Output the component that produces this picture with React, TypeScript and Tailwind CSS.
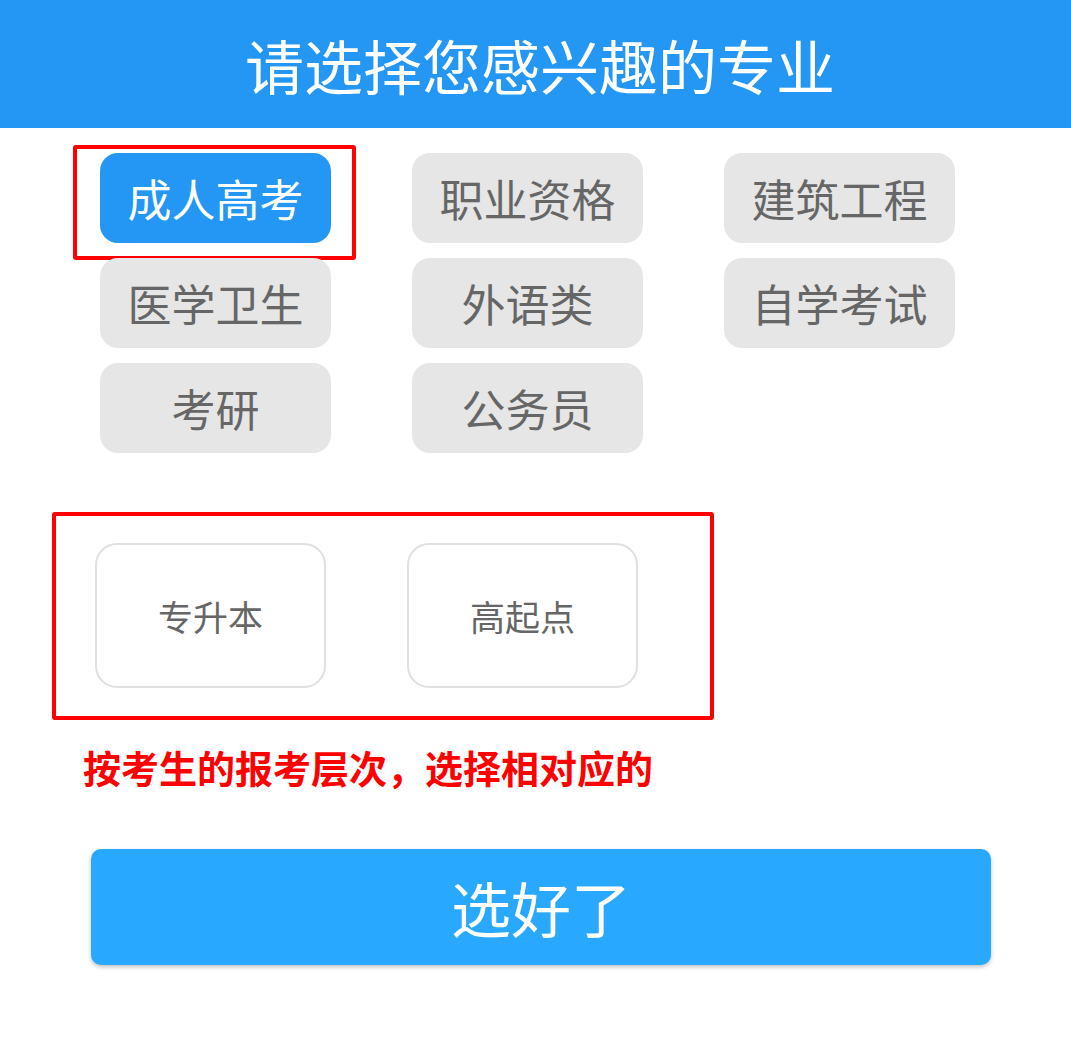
const MAJORS = ["成人高考", "职业资格", "建筑工程", "医学卫生", "外语类", "自学考试", "考研", "公务员"];
const LEVELS = ["专升本", "高起点"];

const font = "font-['Noto_Sans_CJK_SC','Noto_Sans',sans-serif]";

export default function App() {
  return (
    <div className={`w-[1071px] h-[1045px] bg-white ${font}`}>
      <header className="h-[128px] bg-[#2397f3] flex items-center justify-center pl-[9px]">
        <h1 className="text-[59px] leading-none text-white">请选择您感兴趣的专业</h1>
      </header>

      <div className="pl-[100px] pt-[25px] grid grid-cols-[231px_231px_231px] gap-x-[81px] gap-y-[15px]">
        {MAJORS.map((m, i) => (
          <div key={m} className="relative">
            <button
              className={
                i === 0
                  ? "w-full h-[90px] rounded-[18px] bg-[#2397f3] text-white text-[44px] leading-none"
                  : "w-full h-[90px] rounded-[18px] bg-[#e6e6e6] text-[#666666] text-[44px] leading-none"
              }
            >
              {m}
            </button>
            {i === 0 && (
              <div className="absolute left-[-27px] top-[-8px] w-[283px] h-[115px] border-[4px] border-[#ff0000] rounded-[3px] pointer-events-none" />
            )}
          </div>
        ))}
      </div>

      <div className="ml-[52px] mt-[59px] w-[662px] h-[208px] border-[4px] border-[#ff0000] rounded-[3px] pl-[39px] pt-[27px] flex gap-[81px]">
        {LEVELS.map((l) => (
          <button
            key={l}
            className="w-[231px] h-[145px] rounded-[22px] border-2 border-[#e0e0e0] bg-white text-[#666666] text-[35px] leading-none"
          >
            {l}
          </button>
        ))}
      </div>

      <p className="ml-[83px] mt-[27px] h-[40px] leading-[40px] text-[38px] font-bold text-[#ff0000] whitespace-nowrap">
        按考生的报考层次，选择相对应的
      </p>

      <button className="ml-[91px] mt-[62px] w-[900px] h-[116px] rounded-[10px] bg-[#29a8ff] text-white text-[60px] leading-none shadow-[0_2px_4px_rgba(0,0,0,0.25)]">
        选好了
      </button>
    </div>
  );
}
